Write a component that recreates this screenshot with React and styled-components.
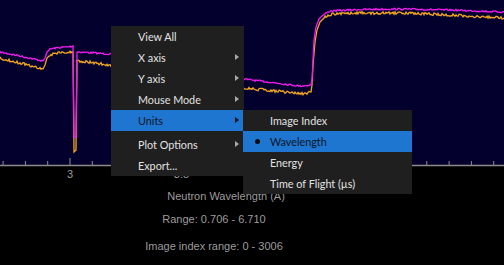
import React from "react";
import styled, { createGlobalStyle } from "styled-components";

const W = 504;
const PLOT_H = 165;
const CHART_H = 180;

const magentaKeys = [
  [0, 52], [20, 56], [43, 61], [45, 58], [47, 52], [50, 49], [55, 48], [72, 46.5],
  [73, 46], [74, 137], [76, 137], [77, 52], [80, 52], [110, 54], [244, 79], [300, 86],
  [311, 85], [312, 80], [313, 60], [314, 40], [316, 27], [319, 19], [323, 15], [330, 11],
  [360, 9.5], [400, 9], [450, 10], [504, 12],
];

const orangeKeys = [
  [0, 58], [20, 63], [43, 69], [45, 65], [47, 58], [50, 55], [55, 53], [72, 52],
  [73, 52], [74, 152], [76, 150], [77, 61], [80, 61], [110, 65], [244, 88], [305, 94],
  [311, 92], [312, 85], [313, 65], [315, 42], [317, 30], [320, 22], [325, 17], [332, 14],
  [360, 13], [400, 13], [450, 15], [504, 18],
];

const makeRandom = (seed) => {
  let s = seed;
  return () => {
    s = (s * 16807) % 2147483647;
    return s / 2147483647;
  };
};

// sample the key points every pixel and put some jitter on the flat parts
const buildPoints = (keys, amp, seed) => {
  const rnd = makeRandom(seed);
  const pts = [];
  for (let i = 0; i < keys.length - 1; i++) {
    const [x0, y0] = keys[i];
    const [x1, y1] = keys[i + 1];
    const slope = (y1 - y0) / (x1 - x0);
    for (let x = x0; x < x1; x += 1) {
      let y = y0 + slope * (x - x0);
      if (Math.abs(slope) < 1) y += (rnd() - 0.5) * amp;
      pts.push(`${x},${y.toFixed(1)}`);
    }
  }
  const last = keys[keys.length - 1];
  pts.push(`${last[0]},${last[1]}`);
  return pts.join(" ");
};

const magentaPts = buildPoints(magentaKeys, 1.6, 7);
const orangePts = buildPoints(orangeKeys, 2.6, 13);

const ticks = [];
for (let i = 0; 3.1 + 22.3 * i < W; i++) {
  ticks.push({ x: 3.1 + 22.3 * i, major: (i - 3) % 5 === 0 });
}
// the other labels sit under the open menus
const tickLabels = [
  { x: 70, text: "3" },
  { x: 181.5, text: "3.5" },
];

const mainItems = [
  { label: "View All" },
  { label: "X axis", sub: true },
  { label: "Y axis", sub: true },
  { label: "Mouse Mode", sub: true },
  { label: "Units", sub: true, active: true },
  { separator: true },
  { label: "Plot Options", sub: true },
  { label: "Export..." },
];

const unitItems = [
  { label: "Image Index" },
  { label: "Wavelength", checked: true, active: true },
  { label: "Energy" },
  { label: "Time of Flight (µs)" },
];

const GlobalStyle = createGlobalStyle`
  html, body {
    margin: 0;
    padding: 0;
    background: #000;
  }
  body {
    font-family: Lato, "Liberation Sans", sans-serif;
  }
`;

const Page = styled.div`
  position: relative;
  width: ${W}px;
  height: 265px;
  overflow: hidden;
  background: #000;
`;

const Chart = styled.svg`
  display: block;
`;

const Info = styled.div`
  display: flex;
  flex-direction: column;
  color: #9c9c9c;
  font-family: "Liberation Sans", Arial, sans-serif;
  font-size: 11px;
  line-height: 14px;
`;

const AxisTitle = styled.div`
  width: 452px;
  margin-top: 9px;
  text-align: center;
`;

const RangeLine = styled.div`
  width: 428px;
  margin-top: ${(p) => p.$gap}px;
  text-align: center;
`;

const Menu = styled.div`
  position: absolute;
  left: ${(p) => p.$x}px;
  top: ${(p) => p.$y}px;
  width: ${(p) => p.$w}px;
  display: flex;
  flex-direction: column;
  background: #1f1f1f;
  font-size: 10.8px;
`;

const MenuRow = styled.div`
  position: relative;
  height: 21px;
  display: flex;
  align-items: center;
  padding-left: 27px;
  color: ${(p) => (p.$active ? "#0b1526" : "#e2e2e2")};
  background: ${(p) => (p.$active ? "#1e76d0" : "transparent")};
  white-space: nowrap;
`;

const Separator = styled.div`
  height: 3px;
`;

const Arrow = styled.span`
  position: absolute;
  right: 5px;
  top: 7px;
  width: 0;
  height: 0;
  border-top: 3.5px solid transparent;
  border-bottom: 3.5px solid transparent;
  border-left: 4px solid ${(p) => (p.$active ? "#0b1526" : "#a8a8a8")};
`;

const Bullet = styled.span`
  position: absolute;
  left: 12px;
  top: 8px;
  width: 5px;
  height: 5px;
  border-radius: 50%;
  background: #0b0b10;
`;

const App = () => {
  return (
    <Page>
      <GlobalStyle />
      <Chart width={W} height={CHART_H} viewBox={`0 0 ${W} ${CHART_H}`}>
        <rect x="0" y="0" width={W} height={PLOT_H} fill="#04002d" />
        <polyline points={orangePts} fill="none" stroke="#f4a81f" strokeWidth="1.3" />
        <polyline points={magentaPts} fill="none" stroke="#f01cf0" strokeWidth="1.3" />
        {ticks.map((t) => (
          <line
            key={t.x}
            x1={t.x}
            x2={t.x}
            y1={t.major ? 158 : 161}
            y2={PLOT_H}
            stroke="#8e8e8e"
            strokeWidth="1"
          />
        ))}
        <line x1="0" x2={W} y1={PLOT_H + 0.5} y2={PLOT_H + 0.5} stroke="#8a8a8a" strokeWidth="1.3" />
        {tickLabels.map((l) => (
          <text
            key={l.text}
            x={l.x}
            y="177.5"
            fill="#9c9c9c"
            fontSize="11"
            fontFamily="Liberation Sans, Arial, sans-serif"
            textAnchor="middle"
          >
            {l.text}
          </text>
        ))}
      </Chart>

      <Info>
        <AxisTitle>Neutron Wavelength (Å)</AxisTitle>
        <RangeLine $gap={9}>Range: 0.706 - 6.710</RangeLine>
        <RangeLine $gap={13}>Image index range: 0 - 3006</RangeLine>
      </Info>

      <Menu $x={111} $y={26} $w={133}>
        {mainItems.map((item, i) =>
          item.separator ? (
            <Separator key={i} />
          ) : (
            <MenuRow key={item.label} $active={item.active}>
              {item.label}
              {item.sub && <Arrow $active={item.active} />}
            </MenuRow>
          )
        )}
      </Menu>

      <Menu $x={243} $y={110} $w={169}>
        {unitItems.map((item) => (
          <MenuRow key={item.label} $active={item.active}>
            {item.checked && <Bullet />}
            {item.label}
          </MenuRow>
        ))}
      </Menu>
    </Page>
  );
};

export default App;
